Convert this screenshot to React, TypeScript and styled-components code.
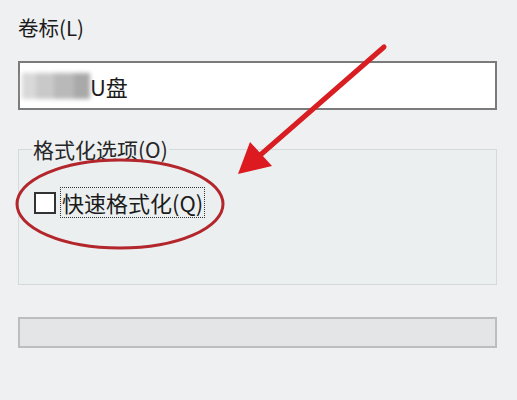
import styled, { createGlobalStyle } from "styled-components";

const GlobalStyle = createGlobalStyle`
  html, body {
    margin: 0;
    padding: 0;
    background: #eef0f1;
  }
  body {
    font-family: "Noto Sans CJK SC", "Noto Sans", sans-serif;
    color: #1b1b1b;
  }
`;

const Page = styled.div`
  position: relative;
  width: 517px;
  height: 400px;
  box-sizing: border-box;
  padding: 12px 20px 0 18px;
  overflow: hidden;
`;

const Label = styled.div`
  font-size: 20.5px;
  line-height: 30px;
  height: 30px;
`;

const TextBox = styled.div`
  margin-top: 19px;
  height: 49px;
  box-sizing: border-box;
  border: 2px solid #7b7b7b;
  background: #ffffff;
  display: flex;
  align-items: center;
  padding-left: 2px;
  font-size: 22px;
`;

const Redacted = styled.div`
  display: flex;
  width: 68px;
  height: 26px;
  filter: blur(2px);
`;

const Patch = styled.span<{ $c: string; $w: number }>`
  display: block;
  width: ${(p) => p.$w}px;
  height: 100%;
  background: ${(p) => p.$c};
`;

const Group = styled.fieldset`
  margin: 26px 0 0;
  padding: 20px 14px 0 15px;
  height: 127px;
  box-sizing: content-box;
  border: 1px solid #d4d9da;
  border-radius: 0;
  background: #eceff0;
`;

const Legend = styled.legend`
  font-size: 21px;
  line-height: 26px;
  padding: 0 1px;
  margin-left: -2px;
  color: #262626;
`;

const CheckRow = styled.label`
  display: flex;
  align-items: center;
  gap: 5px;
  margin-top: 6px;
`;

const Box = styled.span`
  width: 22px;
  height: 22px;
  box-sizing: border-box;
  border: 2px solid #333333;
  background: #ffffff;
`;

const CheckText = styled.span`
  font-size: 22px;
  line-height: 29px;
  padding: 0 1px;
  outline: 1px dotted #333;
`;

const Progress = styled.div`
  margin-top: 32px;
  height: 31px;
  box-sizing: border-box;
  border: 2px solid #bdbdbd;
  background: #e4e5e6;
`;

const Overlay = styled.svg`
  position: absolute;
  left: 0;
  top: 0;
  pointer-events: none;
`;

export default function App() {
  return (
    <>
      <GlobalStyle />
      <Page>
        <Label>卷标(L)</Label>
        <TextBox>
          <Redacted>
            <Patch $c="#d9d9d9" $w={14} />
            <Patch $c="#c9c9c9" $w={18} />
            <Patch $c="#b9b9b9" $w={20} />
            <Patch $c="#a9a9a9" $w={16} />
          </Redacted>
          <span>U盘</span>
        </TextBox>
        <Group>
          <Legend>格式化选项(O)</Legend>
          <CheckRow>
            <Box />
            <CheckText>快速格式化(Q)</CheckText>
          </CheckRow>
        </Group>
        <Progress />
        <Overlay width="517" height="400" viewBox="0 0 517 400">
          <ellipse cx="120" cy="204" rx="103" ry="44" fill="none" stroke="#b3262b" strokeWidth="3" />
          <line x1="384" y1="47" x2="258" y2="157" stroke="#d81e22" strokeWidth="5" strokeLinecap="round" />
          <polygon points="238,174 250,142 272,166" fill="#dc1a1f" />
        </Overlay>
      </Page>
    </>
  );
}
